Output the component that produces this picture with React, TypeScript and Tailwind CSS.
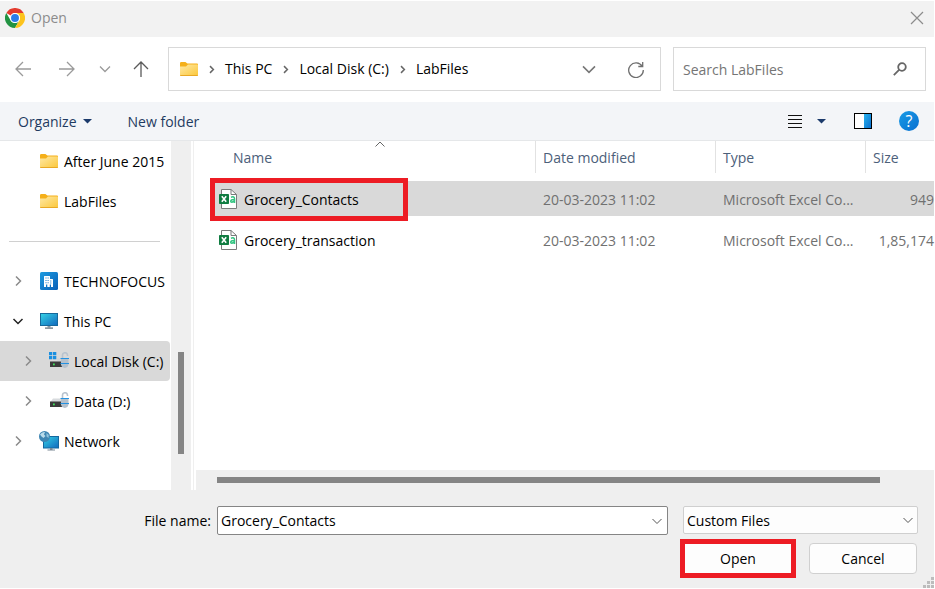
import type { ReactNode } from "react";

function ChromeLogo() {
  return (
    <svg width="20" height="20" viewBox="0 0 48 48" aria-hidden="true">
      <circle cx="24" cy="24" r="24" fill="#fff" />
      <path d="M3.2 12A24 24 0 0 1 44.8 12H24a12 12 0 0 0-10.4 6Z" fill="#e33b2e" />
      <path d="M3.2 12A24 24 0 0 0 24 48l10.4-18A12 12 0 0 1 13.6 30Z" fill="#229342" />
      <path d="M44.8 12A24 24 0 0 1 24 48l10.4-18A12 12 0 0 0 24 12Z" fill="#fcc31d" />
      <circle cx="24" cy="24" r="12" fill="#fff" />
      <circle cx="24" cy="24" r="9.5" fill="#2b7de9" />
    </svg>
  );
}

function FolderIcon() {
  return (
    <svg width="18" height="14" viewBox="0 0 18 14" className="shrink-0" aria-hidden="true">
      <defs>
        <linearGradient id="folder" x1="0" y1="0" x2="1" y2="1">
          <stop offset="0" stopColor="#ffe9a6" />
          <stop offset="1" stopColor="#fbc739" />
        </linearGradient>
      </defs>
      <path d="M0 1.2Q0 0 1.2 0H5.4L7.4 1.6H17Q18 1.6 18 2.6V6H0Z" fill="#f5b01a" />
      <path d="M0 4.4H6L8 2.6H17.2Q18 2.6 18 3.4V13Q18 14 17 14H1Q0 14 0 13Z" fill="url(#folder)" />
      <path d="M0 13H18Q18 14 17 14H1Q0 14 0 13Z" fill="#e9a825" />
    </svg>
  );
}

function BuildingIcon() {
  return (
    <svg width="18" height="18" viewBox="0 0 18 18" className="shrink-0" aria-hidden="true">
      <defs>
        <linearGradient id="building" x1="0" y1="0" x2="1" y2="1">
          <stop offset="0" stopColor="#1d9be0" />
          <stop offset="1" stopColor="#0960b8" />
        </linearGradient>
      </defs>
      <rect width="18" height="18" rx="1.5" fill="url(#building)" />
      <path d="M4 15V4.5Q4 4 4.500 4H9.5Q10 4 10 4.5V7H12.500Q13 7 13 7.500V15H11V12.500H9.8V15H7.300V12.500H6V15Z" fill="#fff" />
      <path d="M5.500 5.500h1v1h-1zM7.600 5.500h1v1h-1zM5.500 8h1v1h-1zM7.600 8h1v1h-1zM5.500 10.300h1v1h-1zM7.600 10.300h1v1h-1zM10.300 8.500h1v1h-1zM10.300 10.500h1v1h-1z" fill="#1478c8" />
    </svg>
  );
}

function MonitorIcon() {
  return (
    <svg width="18" height="16" viewBox="0 0 18 16" className="shrink-0" aria-hidden="true">
      <defs>
        <linearGradient id="screen" x1="0" y1="0" x2="1" y2="1">
          <stop offset="0" stopColor="#35d3e6" />
          <stop offset="1" stopColor="#1268bd" />
        </linearGradient>
      </defs>
      <rect x="0.5" y="0.5" width="17" height="12" fill="url(#screen)" stroke="#17699b" />
      <path d="M7.500 13h3v1.500h-3z" fill="#8a97a3" />
      <path d="M5 14.500h8v1.200H5z" fill="#5c6a76" />
    </svg>
  );
}

function DriveIcon({ system = false }: { system?: boolean }) {
  return (
    <svg width="20" height="18" viewBox="0 0 20 18" className="shrink-0" aria-hidden="true">
      {system ? (
        <path d="M0 0h3.300v3.300H0zM4 0h3.300v3.300H4zM0 4h3.300v3.300H0zM4 4h3.300v3.300H4z" fill="#1a8fe0" />
      ) : (
        <path d="M4 6.500h10l2 4H1Z" fill="#d8dbde" />
      )}
      {system && <path d="M8 6.500h6l2 4H1l2-1.600h5z" fill="#d0d3d6" />}
      <rect x="1" y="9.500" width="14" height="5.500" fill="#3b3b3b" />
      <rect x="4" y="11.500" width="1.800" height="1.800" fill="#3ee05a" />
      <path d="M13.500 6.500V3.500a2.500 2.500 0 0 1 5-.5v1" fill="none" stroke="#b9c3ce" strokeWidth="1.600" />
      <path d="M12 6H19.500V12.500q-.5 3-3.700 3.500Q12.500 15.500 12 12.500Z" fill="#b4c0cc" />
      <path d="M11.500 6.500H20M11.500 11.500H20" stroke="#2492e2" />
    </svg>
  );
}

function NetworkIcon() {
  return (
    <svg width="20" height="20" viewBox="0 0 20 20" className="shrink-0" aria-hidden="true">
      <rect x="4.500" y="5.500" width="15" height="11.500" fill="url(#screen)" stroke="#15689f" />
      <path d="M11 17h2.500v1.500H11zM8.500 18.500h7.500v1H8.500z" fill="#7c8995" />
      <circle cx="5.500" cy="5.500" r="5.500" fill="#3f86b3" />
      <path d="M1 3.500Q3 .5 6 1L5 3.500 6.500 5 4.500 7 2.500 5.500Z" fill="#b9dbea" />
      <path d="M7.500 2l2.300 2-.3 3-2-1.500Z" fill="#8fc3dc" />
    </svg>
  );
}

function CsvIcon() {
  return (
    <svg width="18" height="20" viewBox="0 0 18 20" className="shrink-0" aria-hidden="true">
      <path d="M2.500.5H12L17.500 5.500V19.500H2.500Z" fill="#fff" stroke="#7b7b7b" />
      <path d="M12 .5V5.500H17.500" fill="none" stroke="#7b7b7b" />
      <rect x="0" y="5" width="10" height="10" rx="0.8" fill="#107c41" />
      <path d="M2.800 7.300 7.200 12.700M7.200 7.300 2.800 12.700" stroke="#fff" strokeWidth="1.600" />
      <path d="M12 8.200Q15.500 7 15.500 9.700V14M15.500 10.600Q11.700 10.600 11.700 12.300T15.500 12.300" fill="none" stroke="#33c481" strokeWidth="1.500" />
    </svg>
  );
}

type Dir = "right" | "down" | "up";

const chevronPaths: Record<Dir, string> = {
  right: "M4 1.500 8.500 6 4 10.500",
  down: "M1.500 4 6 8.500 10.500 4",
  up: "M1.500 8.500 6 4 10.500 8.500",
};

function Chevron({ dir, size = 12, stroke = 1.2 }: { dir: Dir; size?: number; stroke?: number }) {
  return (
    <svg width={size} height={size} viewBox="0 0 12 12" fill="none" stroke="currentColor" strokeWidth={stroke} className="shrink-0" aria-hidden="true">
      <path d={chevronPaths[dir]} />
    </svg>
  );
}

function Caret() {
  return (
    <svg width="9" height="5" viewBox="0 0 9 5" aria-hidden="true">
      <path d="M0 0H9L4.500 4.500Z" fill="#1b3a6b" />
    </svg>
  );
}

function NavButton({ label, width, children }: { label: string; width: string; children: ReactNode }) {
  return (
    <button type="button" aria-label={label} className={`flex h-11 shrink-0 items-center justify-center ${width}`}>
      <svg width="16" height="16" viewBox="0 0 16 16" fill="none" stroke="currentColor" strokeWidth="1.300" aria-hidden="true">
        {children}
      </svg>
    </button>
  );
}

type Node = {
  label: string;
  icon: ReactNode;
  chevron?: "right" | "down";
  nested?: boolean;
  selected?: boolean;
};

const pinned: Node[] = [
  { label: "After June 2015", icon: <FolderIcon /> },
  { label: "LabFiles", icon: <FolderIcon /> },
];

const places: Node[] = [
  { label: "TECHNOFOCUS", icon: <BuildingIcon />, chevron: "right" },
  { label: "This PC", icon: <MonitorIcon />, chevron: "down" },
  { label: "Local Disk (C:)", icon: <DriveIcon system />, chevron: "right", nested: true, selected: true },
  { label: "Data (D:)", icon: <DriveIcon />, chevron: "right", nested: true },
  { label: "Network", icon: <NetworkIcon />, chevron: "right" },
];

function TreeItem({ node }: { node: Node }) {
  return (
    <li>
      <button
        type="button"
        className={`flex h-10 w-[170px] items-center rounded-r-sm whitespace-nowrap ${node.nested ? "pl-[22px]" : "pl-3"} ${node.selected ? "bg-[#d9d9d9]" : ""}`}
      >
        <span className={`flex w-[26px] shrink-0 ${node.chevron === "down" ? "text-[#222]" : "text-[#8a8a8a]"}`}>
          {node.chevron && <Chevron dir={node.chevron} stroke={1.5} />}
        </span>
        <span className="flex w-[26px] shrink-0 items-center pl-px">
          <span className="flex w-5 justify-center">{node.icon}</span>
        </span>
        <span className="pt-0.5">{node.label}</span>
      </button>
    </li>
  );
}

const crumbs = ["This PC", "Local Disk (C:)", "LabFiles"];

const files = [
  { name: "Grocery_Contacts", date: "20-03-2023 11:02", type: "Microsoft Excel Co...", size: "949", selected: true },
  { name: "Grocery_transaction", date: "20-03-2023 11:02", type: "Microsoft Excel Co...", size: "1,85,174", selected: false },
];

function FileTable() {
  return (
    <table className="w-full table-fixed border-separate border-spacing-0 text-left">
      <colgroup>
        <col />
        <col className="w-[180px]" />
        <col className="w-[150px]" />
        <col className="w-[69px]" />
      </colgroup>
      <thead>
        <tr className="text-[#4c607a]">
          <th className="h-10 p-0 font-normal">
            <div className="relative -mt-1.5 pl-[23px]">
              Name
              <span className="absolute -top-2.5 left-[164px] text-[#666]">
                <Chevron dir="up" stroke={1} />
              </span>
            </div>
          </th>
          {["Date modified", "Type", "Size"].map((title) => (
            <th key={title} className="h-10 p-0 align-top font-normal">
              <div className="flex h-8 items-center border-l border-[#e2e2e2] pt-0.5 pl-[7px]">{title}</div>
            </th>
          ))}
        </tr>
      </thead>
      <tbody>
        {files.map((file) => (
          <tr
            key={file.name}
            className={`text-[#707070] [&>td]:h-[41px] [&>td]:border-b-6 [&>td]:border-transparent [&>td]:bg-clip-padding [&>td]:pt-0.5 [&>td]:pb-0 ${file.selected ? "[&>td]:bg-[#d9d9d9]" : ""}`}
          >
            <td className="pr-0 pl-[9px] text-black">
              <div className="relative flex items-center gap-[7px]">
                <span className="-mt-0.5">
                  <CsvIcon />
                </span>
                {file.name}
                {file.selected && <span className="absolute -top-3 -left-[9px] h-[43px] w-[198px] border-5 border-[#ed1c24]" />}
              </div>
            </td>
            <td className="pr-0 pl-2">{file.date}</td>
            <td className="pr-0 pl-2">{file.type}</td>
            <td className="pr-0 pl-0 text-right">{file.size}</td>
          </tr>
        ))}
      </tbody>
    </table>
  );
}

export default function App() {
  return (
    <div className="flex min-h-screen flex-col bg-white py-px pr-px font-['Open_Sans','Noto_Sans',sans-serif] text-[14px] leading-5 text-black">
      <header className="flex h-9 items-center bg-[#f2f2f2] pr-2.5 pb-0.5 pl-[5px] text-[#8c8c8c]">
        <ChromeLogo />
        <h1 className="ml-1.5 flex-1">Open</h1>
        <button type="button" aria-label="Close">
          <svg width="14" height="14" viewBox="0 0 14 14" stroke="currentColor" strokeWidth="1.200" aria-hidden="true">
            <path d="M1 1 13 13M13 1 1 13" />
          </svg>
        </button>
      </header>

      <div className="flex h-[65px] items-start pt-2.5 pr-2">
        <div className="flex pr-2 text-[#9a9a9a]">
          <NavButton label="Back" width="w-[46px]">
            <path d="M16 8H1M8 1 1 8l7 7" />
          </NavButton>
          <NavButton label="Forward" width="w-[42px]">
            <path d="M0 8H15M8 1l7 7-7 7" />
          </NavButton>
          <NavButton label="Recent locations" width="w-[34px]">
            <path d="M3 5.500 8 10.500 13 5.500" />
          </NavButton>
          <span className="text-[#5a5a5a]">
            <NavButton label="Up" width="w-[38px]">
              <path d="M8 16V1M1 8 8 1l7 7" />
            </NavButton>
          </span>
        </div>
        <nav aria-label="Path" className="flex h-11 flex-1 items-center border border-[#d9d9d9] pr-4 pl-[11px]">
          <FolderIcon />
          {crumbs.map((crumb) => (
            <span key={crumb} className="flex items-center">
              <span className="flex w-[27px] justify-center text-[#666]">
                <Chevron dir="right" size={9} stroke={2} />
              </span>
              <button type="button" className="whitespace-nowrap">{crumb}</button>
            </span>
          ))}
          <button type="button" aria-label="Previous locations" className="ml-auto text-[#777]">
            <Chevron dir="down" size={16} stroke={1.2} />
          </button>
          <button type="button" aria-label="Refresh" className="ml-[31px] text-[#6f6f6f]">
            <svg width="16" height="17" viewBox="0 0 16 17" fill="none" stroke="currentColor" strokeWidth="1.300" aria-hidden="true">
              <path d="M14.300 5.500A7.300 7.300 0 1 0 15.300 9M14.700 1V5.500H10.300" />
            </svg>
          </button>
        </nav>
        <label className="ml-3 flex h-11 w-[253px] items-center border border-[#d9d9d9] pr-[18px] pl-[9px]">
          <input type="search" placeholder="Search LabFiles" aria-label="Search LabFiles" className="min-w-0 flex-1 pt-0.5 outline-none placeholder:text-[#757575]" />
          <svg width="14" height="14" viewBox="0 0 14 14" fill="none" stroke="#666" strokeWidth="1.800" aria-hidden="true">
            <circle cx="9" cy="5" r="3.800" />
            <path d="M6.300 7.700.8 13.200" />
          </svg>
        </label>
      </div>

      <div className="flex h-[39px] items-center border-b border-[#e5e7e9] bg-[#f3f5f8] pr-[15px] pl-[18px] text-[#1f3b61]">
        <button type="button" className="flex items-center gap-1.5">
          <span className="pt-0.5">Organize</span>
          <Caret />
        </button>
        <button type="button" className="ml-9 pt-0.5">New folder</button>
        <button type="button" aria-label="Change view" className="ml-auto flex items-center gap-3.5">
          <svg width="16" height="16" viewBox="0 0 16 16" stroke="#111" aria-hidden="true">
            <path d="M1 2.500H15M1 6.500H15M1 10.500H15M1 14.500H15" />
          </svg>
          <Caret />
        </button>
        <button type="button" aria-label="Preview pane" className="ml-7">
          <svg width="18" height="16" viewBox="0 0 18 16" aria-hidden="true">
            <defs>
              <linearGradient id="pane" x1="0" y1="0" x2="1" y2="1">
                <stop offset="0" stopColor="#29b3ee" />
                <stop offset="1" stopColor="#0b70cf" />
              </linearGradient>
            </defs>
            <rect x="0.5" y="0.5" width="17" height="15" fill="#fff" stroke="#000" />
            <path d="M10 1h7v14h-7z" fill="url(#pane)" />
          </svg>
        </button>
        <button type="button" aria-label="Help" className="ml-[27px] size-5 rounded-full bg-linear-to-br from-[#1a9be6] to-[#0a6fd0] text-center text-[16px] leading-5 text-white">
          ?
        </button>
      </div>

      <main className="flex flex-1">
        <nav aria-label="Folders" className="w-[171px] shrink-0">
          <ul>
            {pinned.map((node) => (
              <TreeItem key={node.label} node={node} />
            ))}
          </ul>
          <hr className="my-5 mr-[11px] -mb-px ml-[9px] border-[#d0d0d0]" />
          <ul className="mt-5">
            {places.map((node) => (
              <TreeItem key={node.label} node={node} />
            ))}
          </ul>
        </nav>
        <div className="flex w-5 shrink-0 flex-col items-center bg-[#efefef] pt-[211px]">
          <div className="h-[102px] w-1.5 bg-[#858585]" />
        </div>
        <section aria-label="Files" className="ml-0.5 flex min-w-0 flex-1 flex-col border-l border-[#efefef] pl-0.5">
          <div className="flex-1 pl-3.5">
            <FileTable />
          </div>
          <div className="flex h-5 items-center bg-[#efefef] pr-[54px] pl-[21px]">
            <div className="h-1.5 flex-1 bg-[#858585]" />
          </div>
        </section>
      </main>

      <footer className="relative h-[98px] bg-[#efefef] pt-4">
        <div className="flex items-start pr-4">
          <label htmlFor="file-name" className="w-[211px] pt-px text-right leading-7">File name:</label>
          <div className="ml-1.5 flex h-[29px] flex-1 items-center rounded-xs border border-[#858585] bg-white pr-1">
            <input id="file-name" defaultValue="Grocery_Contacts" className="min-w-0 flex-1 pl-[3px] outline-none" />
            <button type="button" aria-label="Recent file names" className="text-[#555]">
              <Chevron dir="down" stroke={1} />
            </button>
          </div>
          <div className="relative ml-[15px] w-[235px]">
            <select aria-label="File type" className="h-7 w-full appearance-none rounded-xs border border-[#cfcfcf] bg-[#fdfdfd] pt-0.5 pl-[3px]">
              <option>Custom Files</option>
            </select>
            <span className="pointer-events-none absolute top-2 right-1 text-[#555]">
              <Chevron dir="down" stroke={1} />
            </span>
          </div>
        </div>
        <div className="mt-1 flex items-center justify-end gap-[13px] pr-[17px]">
          <button type="button" className="h-[39px] w-[116px] border-5 border-[#ed1c24] bg-[#fdfdfd]">Open</button>
          <button type="button" className="h-[31px] w-[108px] rounded-sm border border-[#d0d0d0] bg-[#fdfdfd]">Cancel</button>
        </div>
        <svg width="11" height="11" viewBox="0 0 11 11" className="absolute right-0 bottom-0" fill="#bcbcbc" aria-hidden="true">
          <path d="M8 0h3v3H8zM4 4h3v3H4zM8 4h3v3H8zM0 8h3v3H0zM4 8h3v3H4zM8 8h3v3H8z" />
        </svg>
      </footer>
    </div>
  );
}
